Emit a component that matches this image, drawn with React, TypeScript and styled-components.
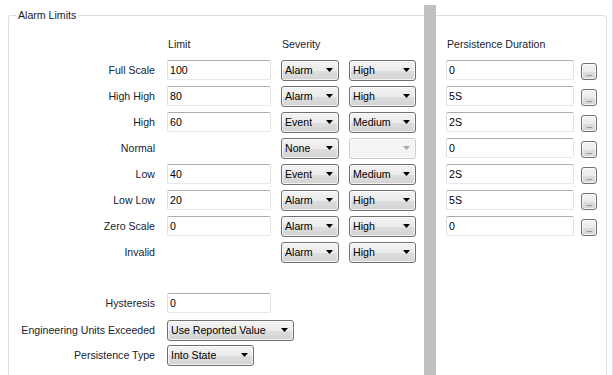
import styled, { createGlobalStyle } from "styled-components";

const GlobalStyle = createGlobalStyle`
  html, body {
    margin: 0;
    padding: 0;
    background: #ffffff;
  }
  body {
    font-family: "Liberation Sans", Arial, sans-serif;
    font-size: 10.6px;
    color: #17222f;
  }
`;

type LimitRow = {
  label: string;
  limit?: string;
  kind: string;
  level: string;
  duration?: string;
};

const rows: LimitRow[] = [
  { label: "Full Scale", limit: "100", kind: "Alarm", level: "High", duration: "0" },
  { label: "High High", limit: "80", kind: "Alarm", level: "High", duration: "5S" },
  { label: "High", limit: "60", kind: "Event", level: "Medium", duration: "2S" },
  { label: "Normal", kind: "None", level: "", duration: "0" },
  { label: "Low", limit: "40", kind: "Event", level: "Medium", duration: "2S" },
  { label: "Low Low", limit: "20", kind: "Alarm", level: "High", duration: "5S" },
  { label: "Zero Scale", limit: "0", kind: "Alarm", level: "High", duration: "0" },
  { label: "Invalid", kind: "Alarm", level: "High" },
];

const Arrow = ({ disabled }: { disabled?: boolean }) => (
  <svg width="7" height="4" viewBox="0 0 7 4">
    <path d="M0 0H7L3.5 4Z" fill={disabled ? "#a8a8a8" : "#000"} />
  </svg>
);

const DropDown = ({ value, width, disabled }: { value: string; width: number; disabled?: boolean }) => (
  <Combo $w={width} $disabled={disabled}>
    <ComboText>{value}</ComboText>
    <Arrow disabled={disabled} />
  </Combo>
);

const App = () => {
  return (
    <>
      <GlobalStyle />
      <Page>
        <LeftPane>
          <GroupBox>
            <Legend>Alarm Limits</Legend>
            <LimitGrid>
              <span />
              <Header>Limit</Header>
              <Header>Severity</Header>
              <span />
              {rows.map((r) => (
                <Row key={r.label} r={r} />
              ))}
            </LimitGrid>
            <OptionGrid>
              <Label>Hysteresis</Label>
              <TextBox $w={104} readOnly value="0" />
              <Label>Engineering Units Exceeded</Label>
              <DropDown value="Use Reported Value" width={127} />
              <Label>Persistence Type</Label>
              <DropDown value="Into State" width={87} />
            </OptionGrid>
          </GroupBox>
        </LeftPane>
        <Splitter />
        <RightPane>
          <DurationGrid>
            <Header>Persistence Duration</Header>
            <span />
            {rows
              .filter((r) => r.duration !== undefined)
              .map((r) => (
                <DurationCell key={r.label} value={r.duration!} />
              ))}
          </DurationGrid>
        </RightPane>
        <Edge />
      </Page>
    </>
  );
};

const Row = ({ r }: { r: LimitRow }) => (
  <>
    <Label>{r.label}</Label>
    {r.limit !== undefined ? <TextBox $w={104} readOnly value={r.limit} /> : <span />}
    <DropDown value={r.kind} width={58} />
    <DropDown value={r.level} width={67} disabled={r.kind === "None"} />
  </>
);

const DurationCell = ({ value }: { value: string }) => (
  <>
    <TextBox $w={128} readOnly value={value} />
    <DotsButton>...</DotsButton>
  </>
);

export default App;

const Page = styled.div`
  width: 613px;
  height: 375px;
  display: flex;
  overflow: hidden;
  background: #fff;
`;

const LeftPane = styled.div`
  width: 424px;
  display: flex;
  flex-direction: column;
`;

const GroupBox = styled.div`
  position: relative;
  flex: 1;
  margin: 15px 0 0 8px;
  border-top: 1px solid #d5dfe5;
  border-left: 1px solid #d5dfe5;
  border-top-left-radius: 3px;
  padding-top: 15px;
`;

const Legend = styled.span`
  position: absolute;
  top: -7px;
  left: 7px;
  padding: 0 2px;
  background: #fff;
  line-height: 13px;
`;

const LimitGrid = styled.div`
  display: grid;
  grid-template-columns: 148px 104px 58px 67px;
  grid-auto-rows: 26px;
  column-gap: 10px;
  align-items: center;
`;

const OptionGrid = styled.div`
  display: grid;
  grid-template-columns: 148px auto;
  grid-template-rows: 24px 30px 20px;
  column-gap: 10px;
  align-items: center;
  justify-items: start;
  margin-top: 26px;

  & > span {
    justify-self: stretch;
  }
`;

const Label = styled.span`
  text-align: right;
  padding-right: 2px;
  white-space: nowrap;
`;

const Header = styled.span`
  padding-left: 1px;
  white-space: nowrap;
`;

const TextBox = styled.input<{ $w: number }>`
  width: ${(p) => p.$w}px;
  height: 20px;
  box-sizing: border-box;
  margin: 0;
  padding: 0 2px;
  border: 1px solid;
  border-color: #abadb3 #e2e3ea #e3e9ef #dbdfe6;
  border-radius: 2px;
  background: #fff;
  font: inherit;
  color: #000;
  outline: none;
`;

const Combo = styled.div<{ $w: number; $disabled?: boolean }>`
  width: ${(p) => p.$w}px;
  height: 21px;
  box-sizing: border-box;
  display: flex;
  align-items: center;
  justify-content: space-between;
  padding: 0 5px 0 3px;
  border: 1px solid ${(p) => (p.$disabled ? "#c9cbcd" : "#707070")};
  border-radius: 3px;
  background: ${(p) =>
    p.$disabled
      ? "#f4f4f4"
      : "linear-gradient(#f3f3f3 0%, #ebebeb 50%, #dedede 51%, #d3d3d3 100%)"};
  box-shadow: inset 0 0 0 1px ${(p) => (p.$disabled ? "#fbfbfb" : "rgba(255,255,255,0.7)")};
`;

const ComboText = styled.span`
  color: #000;
  white-space: nowrap;
  overflow: hidden;
`;

const Splitter = styled.div`
  width: 12px;
  margin-top: 5px;
  background: #c0c0c0;
`;

const RightPane = styled.div`
  width: 171px;
  box-sizing: border-box;
  margin-top: 15px;
  padding: 15px 0 0 10px;
  border-top: 1px solid #d5dfe5;
  border-right: 1px solid #d5dfe5;
  border-top-right-radius: 4px;
`;

const DurationGrid = styled.div`
  display: grid;
  grid-template-columns: 128px 16px;
  grid-auto-rows: 26px;
  column-gap: 7px;
  align-items: center;
`;

const DotsButton = styled.div`
  width: 16px;
  height: 17px;
  box-sizing: border-box;
  margin-top: 2px;
  border: 1px solid #707070;
  border-radius: 3px;
  background: linear-gradient(#f3f3f3 0%, #ebebeb 50%, #dedede 51%, #d3d3d3 100%);
  box-shadow: inset 0 0 0 1px rgba(255, 255, 255, 0.7);
  display: flex;
  align-items: flex-end;
  justify-content: center;
  font-size: 8px;
  line-height: 11px;
  color: #222;
  letter-spacing: -0.5px;
`;

const Edge = styled.div`
  flex: 1;
  border-right: 1px solid #dcdcf2;
`;
